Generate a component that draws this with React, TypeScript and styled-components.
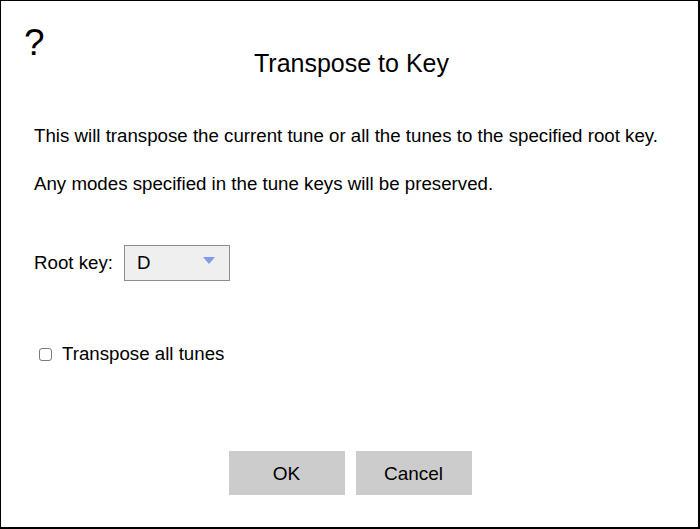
import React from "react";
import styled, { createGlobalStyle } from "styled-components";

const Global = createGlobalStyle`
  html, body { margin: 0; padding: 0; background: #fff; }
  body { font-family: "Liberation Sans", Arial, Helvetica, sans-serif; color: #000; }
`;

const Dialog = styled.div`
  box-sizing: border-box;
  width: 700px;
  height: 529px;
  border-style: solid;
  border-color: #000;
  border-width: 1px 2px 2px 1px;
  background: #fff;
  display: flex;
  flex-direction: column;
  padding: 0 0 0 33px;
`;

const Header = styled.div`
  display: grid;
  grid-template-columns: 60px 1fr 60px;
  align-items: start;
  margin-left: -33px;
  padding-top: 23px;
`;

const Help = styled.div`
  font-size: 37px;
  line-height: 38px;
  padding-left: 23px;
  cursor: pointer;
`;

const Title = styled.h1`
  margin: 0;
  padding: 24px 0 0 4px;
  font-size: 25px;
  font-weight: normal;
  line-height: 30px;
  text-align: center;
`;

const Para = styled.p<{ $top: number }>`
  margin: ${(p) => p.$top}px 0 0 0;
  font-size: 18.7px;
  line-height: 22px;
`;

const KeyRow = styled.div`
  display: flex;
  align-items: center;
  gap: 11px;
  margin-top: 50px;
  font-size: 18.7px;
`;

const Select = styled.div`
  box-sizing: border-box;
  width: 106px;
  height: 36px;
  border: 1px solid #8e8e8e;
  background: #efefef;
  display: flex;
  align-items: center;
  justify-content: space-between;
  padding: 0 14px 0 12px;
  font-size: 18.7px;
`;

const Arrow = styled.span`
  width: 0;
  height: 0;
  border-left: 6px solid transparent;
  border-right: 6px solid transparent;
  border-top: 7px solid #7d9cf0;
  margin-top: -6px;
`;

const CheckRow = styled.label`
  display: flex;
  align-items: center;
  gap: 10px;
  margin-top: 62px;
  margin-left: 5px;
  font-size: 18.7px;
`;

const Box = styled.span`
  box-sizing: border-box;
  width: 13px;
  height: 13px;
  border: 1px solid #7a7a7a;
  border-radius: 3px;
  background: #fff;
`;

const Buttons = styled.div`
  margin-top: auto;
  margin-bottom: 32px;
  margin-left: -33px;
  display: flex;
  justify-content: center;
  gap: 11px;
  padding-left: 1px;
`;

const Button = styled.button`
  width: 116px;
  height: 44px;
  border: none;
  background: #cccccc;
  font-family: "Liberation Sans", Arial, sans-serif;
  font-size: 19px;
  color: #000;
  padding: 2px 0 0 0;
`;

export default function App() {
  return (
    <>
      <Global />
      <Dialog>
        <Header>
          <Help>?</Help>
          <Title>Transpose to Key</Title>
          <span />
        </Header>
        <Para $top={47}>
          This will transpose the current tune or all the tunes to the specified root key.
        </Para>
        <Para $top={26}>Any modes specified in the tune keys will be preserved.</Para>
        <KeyRow>
          <span>Root key:</span>
          <Select>
            <span>D</span>
            <Arrow />
          </Select>
        </KeyRow>
        <CheckRow>
          <Box />
          <span>Transpose all tunes</span>
        </CheckRow>
        <Buttons>
          <Button>OK</Button>
          <Button>Cancel</Button>
        </Buttons>
      </Dialog>
    </>
  );
}
